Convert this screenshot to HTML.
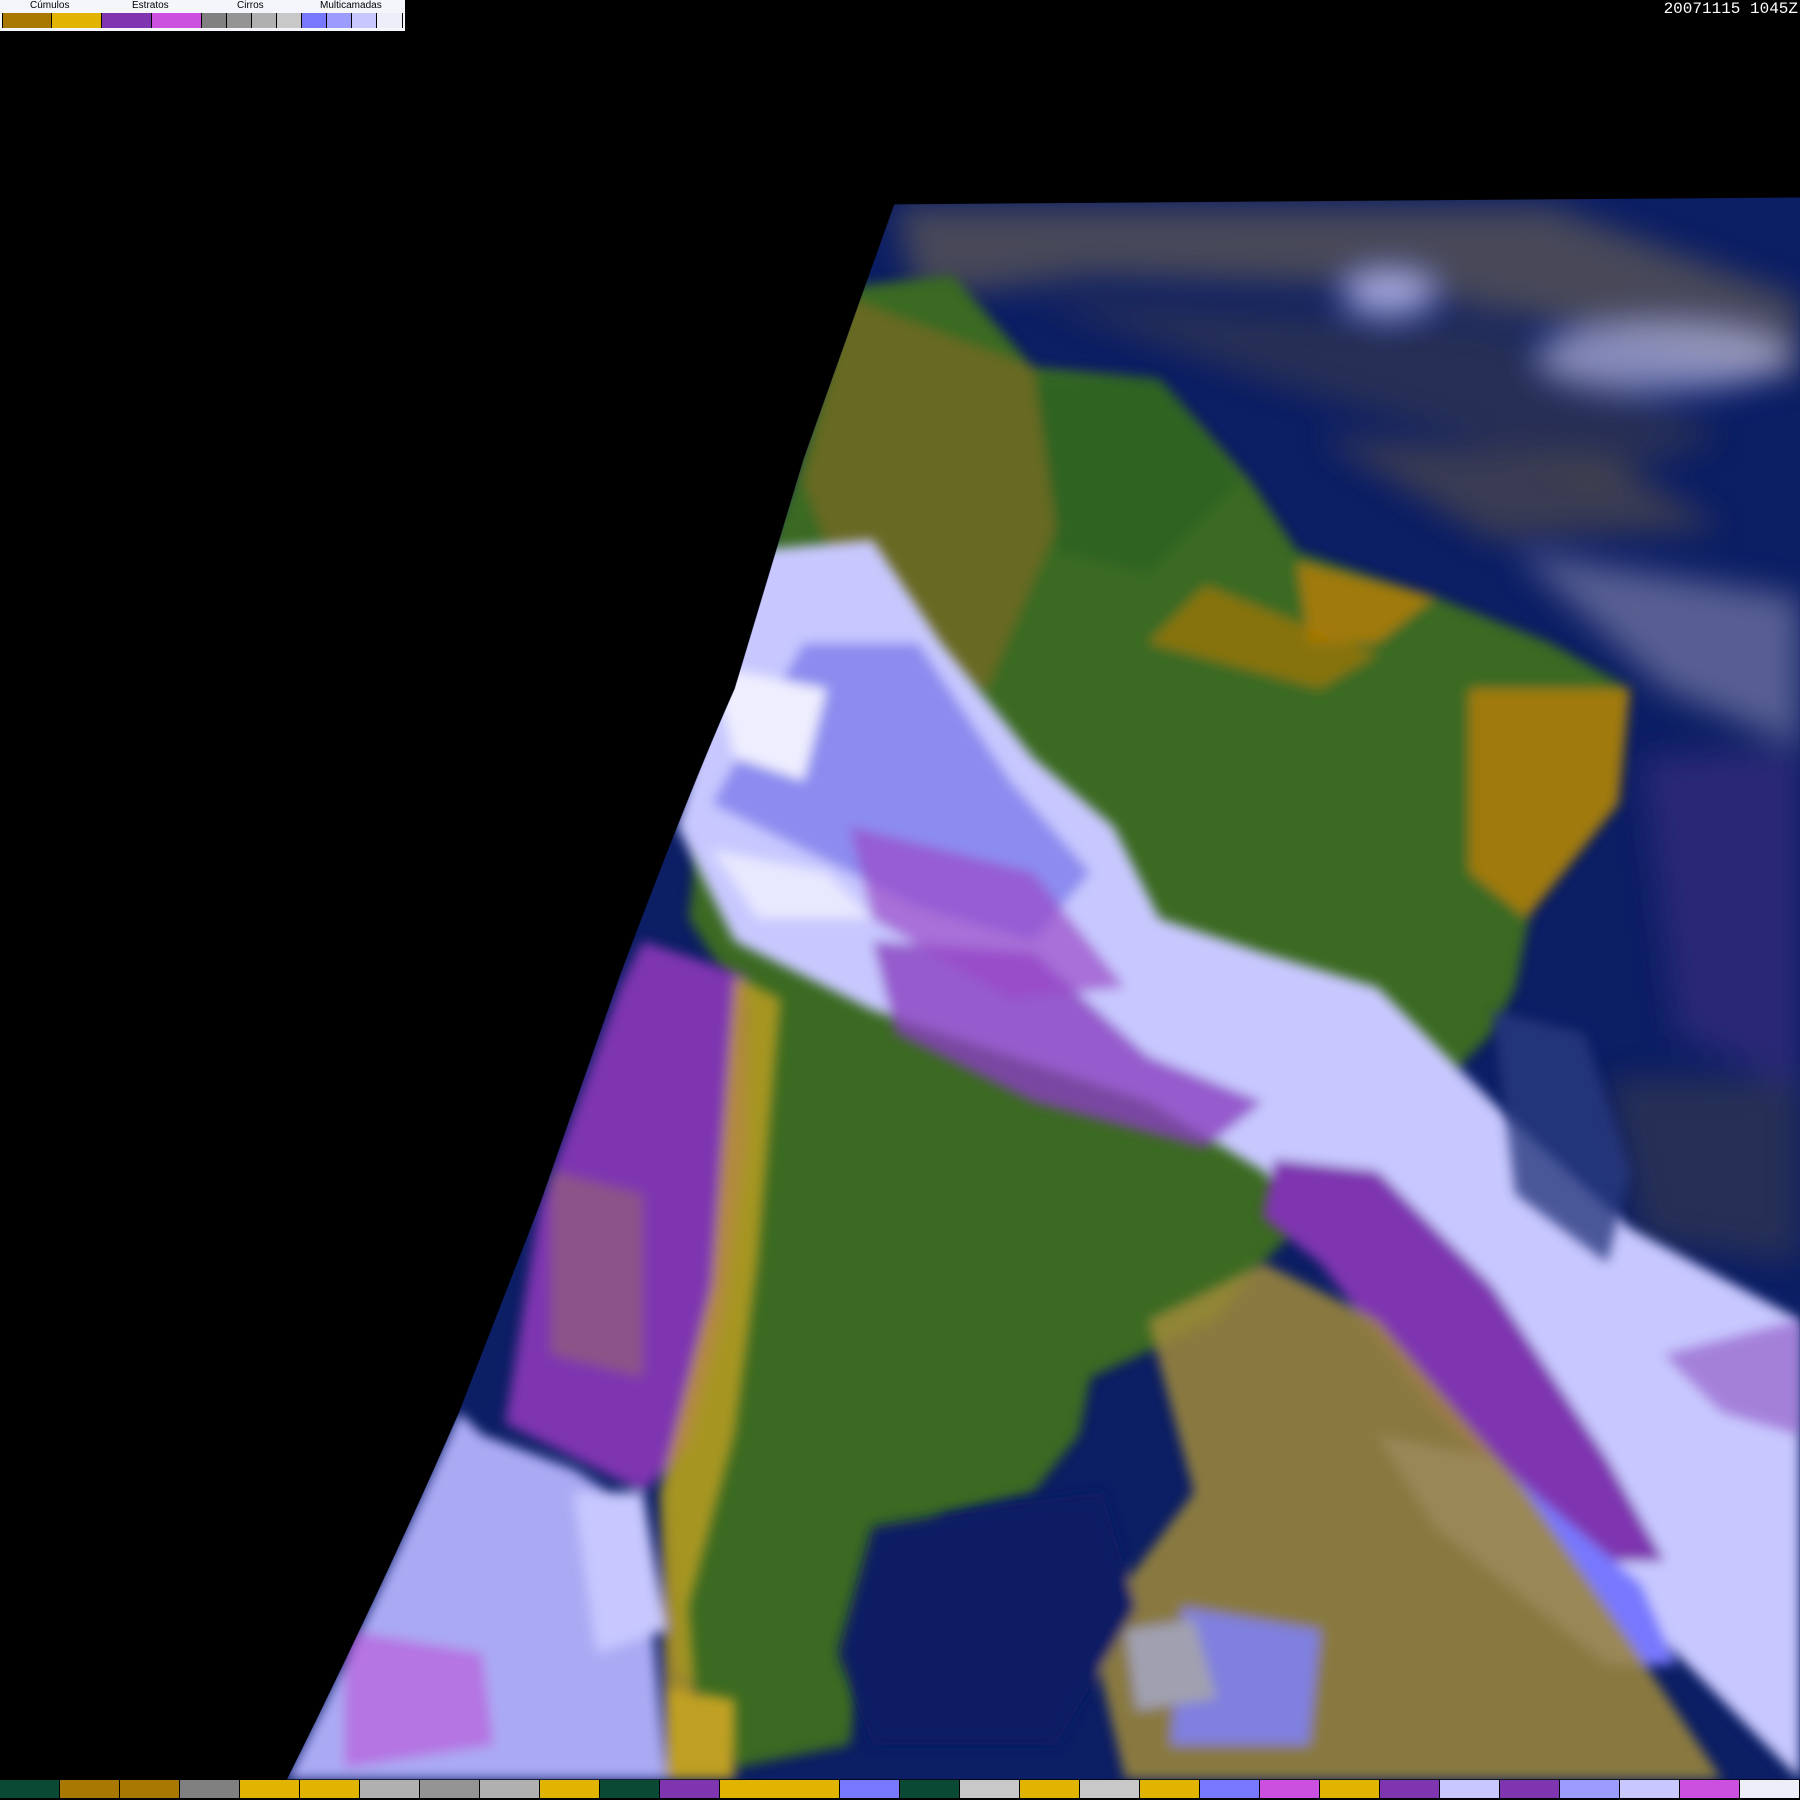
<!DOCTYPE html>
<html><head><meta charset="utf-8"><style>
html,body{margin:0;padding:0;background:#000;width:1800px;height:1800px;overflow:hidden;position:relative;font-family:"Liberation Sans",sans-serif}
svg{position:absolute;left:0;top:0}
#leg{position:absolute;left:0;top:0;width:405px;height:31px;background:#f4f6fc}
#leg .t{position:absolute;top:0;font-size:10px;color:#000}
#leg .c{position:absolute;top:13px;height:15px;border-left:1px solid #000}
#ts{position:absolute;right:2px;top:0;color:#fff;font-family:"Liberation Mono",monospace;font-size:16px}
#bar{position:absolute;left:0;top:1780px;width:1800px;height:18px;display:flex}
#bar div{width:59px;height:18px;border-right:1px solid #000}
</style></head><body>
<svg width="1800" height="1800" viewBox="0 0 1568 1568">
<defs>
<clipPath id="cp"><path d="M779,178 L1568,172 L1568,1550 L250,1550 Q330,1390 400,1230 L470,1050 L540,850 Q600,690 640,600 L700,400 Z"/></clipPath>
<filter id="b"><feGaussianBlur stdDeviation="5"/></filter>
<filter id="b2"><feGaussianBlur stdDeviation="14"/></filter>
</defs>
<g clip-path="url(#cp)">
<rect x="0" y="150" width="1568" height="1420" fill="#0c1e64"/>
<g filter="url(#b2)">
<path d="M780,180 L1350,180 L1568,260 L1568,330 L1400,290 L1200,250 L950,240 L800,260Z" fill="#7a6c50" opacity=".55"/>
<path d="M900,260 L1300,280 L1500,380 L1400,420 L1100,330Z" fill="#5a5040" opacity=".35"/>
<ellipse cx="1450" cy="310" rx="110" ry="30" fill="#b8b8e0" opacity=".7"/>
<ellipse cx="1210" cy="255" rx="40" ry="18" fill="#c8c8ff" opacity=".8"/>
<path d="M1320,480 L1568,520 L1568,650 L1450,600Z" fill="#8a8ab0" opacity=".6"/>
<path d="M1430,660 L1568,650 L1568,950 L1460,900Z" fill="#5a3a90" opacity=".4"/>
<path d="M1150,380 L1400,400 L1500,460 L1300,470Z" fill="#6a5a40" opacity=".5"/>
<path d="M1400,940 L1568,940 L1568,1100 L1430,1080Z" fill="#5a5040" opacity=".35"/>
</g>
<g filter="url(#b)">
<path d="M740,250 L830,240 L900,320 L1010,330 L1090,420 L1130,480 L1250,520 L1350,560 L1420,600 L1410,680 L1340,760 L1320,860 L1300,900 L1200,1000 L1100,1100 L1060,1150 L950,1200 L940,1250 L900,1300 L820,1320 L790,1380 L750,1450 L740,1520 L640,1540 L590,1450 L580,1300 L620,1150 L640,1000 L650,880 L600,800 L620,620 L690,420Z" fill="#3b6a22"/>
<path d="M900,330 L1010,330 L1080,420 L1000,500 L920,480Z" fill="#2e6420"/>
<path d="M1130,490 L1250,520 L1200,560 L1140,560Z" fill="#a07a10"/>
<path d="M1280,600 L1420,600 L1410,700 L1330,800 L1280,760Z" fill="#a07a10"/>
<path d="M1050,510 L1200,570 L1150,600 L1000,560Z" fill="#a87800" opacity=".7"/>
<path d="M740,260 L900,320 L920,460 L860,600 L760,580 L700,420Z" fill="#7a6a20" opacity=".7"/>
</g>
<g filter="url(#b)">
<path d="M560,820 L650,850 L650,1000 L630,1150 L600,1260 L560,1300 L440,1240 L470,1050 L540,860Z" fill="#7f34b0"/>
<path d="M480,1020 L560,1040 L560,1200 L480,1180Z" fill="#9a7060" opacity=".5"/>
<path d="M640,850 L680,870 L660,1100 L640,1250 L600,1400 L610,1530 L580,1530 L575,1300 L620,1120Z" fill="#c0a020" opacity=".8"/>
<path d="M650,480 L760,470 L820,560 L900,660 L970,720 L1010,800 L1100,830 L1200,860 L1300,960 L1420,1070 L1568,1150 L1568,1550 L1470,1450 L1360,1340 L1300,1250 L1180,1100 L1100,1020 L1000,960 L880,920 L760,880 L640,820 L590,720 L620,600Z" fill="#c8c8ff"/>
<path d="M700,560 L800,560 L880,680 L950,760 L900,820 L800,790 L700,740 L620,700Z" fill="#8c8cf0"/>
<path d="M760,820 L900,830 L1000,920 L1100,960 L1050,1000 L900,960 L780,900Z" fill="#8a40c0" opacity=".8"/>
<path d="M740,720 L900,760 L980,860 L880,870 L760,800Z" fill="#9a48c8" opacity=".7"/>
<path d="M1110,1010 L1200,1020 L1300,1120 L1400,1270 L1450,1360 L1380,1360 L1250,1230 L1150,1100 L1100,1060Z" fill="#7f34b0"/>
<path d="M1200,1250 L1300,1270 L1430,1380 L1460,1450 L1400,1450 L1250,1330Z" fill="#7878ff"/>
<path d="M620,580 L720,600 L700,680 L640,660Z" fill="#eeeeff"/>
<path d="M620,740 L720,760 L760,800 L660,800Z" fill="#e8e8ff"/>
<path d="M1000,1150 L1100,1100 L1200,1150 L1330,1300 L1420,1430 L1500,1550 L980,1550 L950,1420 L1040,1300Z" fill="#a08a38" opacity=".85"/>
<path d="M1030,1400 L1150,1420 L1140,1520 L1020,1520Z" fill="#8080e0"/>
<path d="M980,1420 L1040,1410 L1060,1480 L990,1490Z" fill="#a0a0b0"/>
<path d="M420,1250 L500,1280 L560,1320 L580,1550 L250,1550 Q330,1390 400,1230Z" fill="#aaaaf4"/>
<path d="M300,1420 L420,1440 L430,1520 L300,1540Z" fill="#c040d0" opacity=".5"/>
<path d="M500,1300 L560,1300 L580,1420 L520,1440Z" fill="#c8c8ff"/>
<path d="M580,1470 L640,1480 L640,1550 L580,1550Z" fill="#c0a020"/>
<path d="M760,1330 L880,1310 L960,1300 L990,1400 L920,1520 L760,1520 L730,1440Z" fill="#0c1e64"/>
</g>
<g filter="url(#b)" opacity=".8">
<path d="M1300,880 L1380,900 L1420,1020 L1400,1100 L1320,1040Z" fill="#2a3a80"/>
<path d="M1450,1180 L1568,1150 L1568,1250 L1500,1230Z" fill="#7f34b0" opacity=".6"/>
</g>
</g>
</svg>
<div id="leg">
<span class="t" style="left:30px">Cúmulos</span>
<span class="t" style="left:132px">Estratos</span>
<span class="t" style="left:237px">Cirros</span>
<span class="t" style="left:320px">Multicamadas</span>
<div class="c" style="left:2px;width:48px;background:#a87800"></div>
<div class="c" style="left:51px;width:49px;background:#e0b400"></div>
<div class="c" style="left:101px;width:49px;background:#7f34b0"></div>
<div class="c" style="left:151px;width:49px;background:#cc50e0"></div>
<div class="c" style="left:201px;width:24px;background:#808080"></div>
<div class="c" style="left:226px;width:24px;background:#949494"></div>
<div class="c" style="left:251px;width:24px;background:#b0b0b0"></div>
<div class="c" style="left:276px;width:24px;background:#c8c8c8"></div>
<div class="c" style="left:301px;width:24px;background:#7878ff"></div>
<div class="c" style="left:326px;width:24px;background:#9c9cff"></div>
<div class="c" style="left:351px;width:24px;background:#c8c8ff"></div>
<div class="c" style="left:376px;width:25px;background:#eeeefa;border-right:1px solid #000"></div>
</div>
<div id="ts">20071115 1045Z</div>
<div id="bar">
<div style="background:#0a4a34"></div><div style="background:#a87800"></div><div style="background:#a87800"></div><div style="background:#808080"></div><div style="background:#e0b400"></div><div style="background:#e0b400"></div><div style="background:#b0b0b0"></div><div style="background:#949494"></div><div style="background:#b0b0b0"></div><div style="background:#e0b400"></div><div style="background:#0a4a34"></div><div style="background:#7f34b0"></div><div style="background:#e0b400;border-right:none;width:60px"></div><div style="background:#e0b400"></div><div style="background:#7878ff"></div><div style="background:#0a4a34"></div><div style="background:#c8c8c8"></div><div style="background:#e0b400"></div><div style="background:#c8c8c8"></div><div style="background:#e0b400"></div><div style="background:#7878ff"></div><div style="background:#cc50e0"></div><div style="background:#e0b400"></div><div style="background:#7f34b0"></div><div style="background:#c8c8ff"></div><div style="background:#7f34b0"></div><div style="background:#9c9cff"></div><div style="background:#c8c8ff"></div><div style="background:#cc50e0"></div><div style="background:#eeeefa"></div>
</div>
</body></html>
